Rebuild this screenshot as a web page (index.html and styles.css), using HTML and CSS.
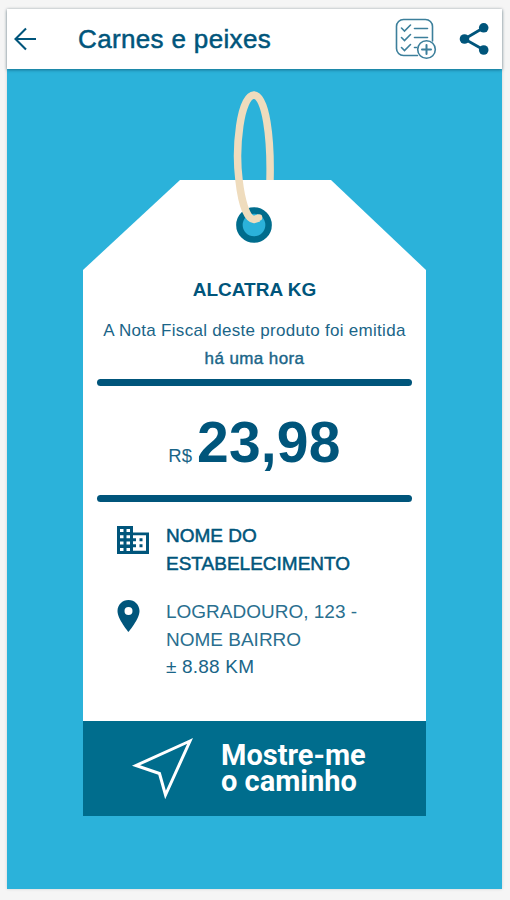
FILE: index.html
```html
<!DOCTYPE html>
<html lang="pt-BR">
<head>
    <meta charset="UTF-8">
    <meta name="viewport" content="width=device-width, initial-scale=1.0">
    <title>Carnes e peixes</title>
    <link rel="stylesheet" href="styles.css">
</head>
<body>
    <div class="screen">
        <header class="top-bar">
            <svg class="icon-back" viewBox="0 0 24 24" fill="none" stroke="currentColor" stroke-width="2.1">
                <path d="M22 12H1.500M12 1.500L1.500 12 12 22.500"/>
            </svg>
            <h1>Carnes e peixes</h1>
            <svg class="icon-list" viewBox="0 0 42 42" fill="none" stroke="currentColor" stroke-width="1.6" stroke-linecap="round">
                <path d="M22.500 37.500H8.500a7 7 0 0 1-7-7v-22a7 7 0 0 1 7-7h22a7 7 0 0 1 7 7V23"/>
                <path d="M6.500 10l3 3 6-6M6.500 19.500l3 3 6-6M6.500 29.500l3 3 6-6"/>
                <path d="M19.500 10.500h13M19.500 19.500h13M19.500 29.500h2"/>
                <circle cx="31.500" cy="31.500" r="8.800"/>
                <path d="M31.500 27v9M27 31.500h9" stroke-width="2"/>
            </svg>
            <svg class="icon-share" viewBox="0 0 30 34" fill="currentColor">
                <path d="M25 5.500L5.500 17 25 28" fill="none" stroke="currentColor" stroke-width="2.800"/>
                <circle cx="5.500" cy="17" r="4.800"/>
                <circle cx="24.700" cy="5.800" r="4.800"/>
                <circle cx="24.700" cy="28" r="4.800"/>
            </svg>
        </header>

        <main class="content">
            <div class="tag">
                <svg class="rope" viewBox="0 0 50 160" fill="none">
                    <circle cx="26" cy="135" r="14.600" fill="#2bb2da" stroke="#006d8d" stroke-width="6.500"/>
                    <path d="M42 90C43 48 38 6 26 5C12 6 7 58 11 90C13 108 18 129 26 129.500L31 128" stroke="#efdcbd" stroke-width="7.500"/>
                    <circle cx="31" cy="127.500" r="3.300" fill="#efdcbd"/>
                </svg>
                <div class="tag-body">
                    <h2>ALCATRA KG</h2>
                    <p class="issued">A Nota Fiscal deste produto foi emitida<br><strong>há uma hora</strong></p>
                    <hr>
                    <div class="price">
                        <span class="currency">R$</span>
                        <span class="value">23,98</span>
                    </div>
                    <hr>
                    <div class="info">
                        <svg class="icon-store" viewBox="0 0 32 28" fill="currentColor" fill-rule="evenodd">
                            <path d="M0 0H16V6.500H32V28H0ZM3 3v3h3.500v-3ZM9.500 3v3H13v-3ZM3 9.200v3h3.500v-3ZM9.500 9.200v3H13v-3ZM3 15.500v3h3.500v-3ZM9.500 15.500v3H13v-3ZM3 22v3h3.500v-3ZM9.500 22v3H13v-3ZM16 9.300v3h3v3h-3v3h3v3h-3v3.500H29V9.300ZM22.500 12.300h3v3h-3ZM22.500 18.300h3v3h-3Z"/>
                        </svg>
                        <p class="store">NOME DO<br>ESTABELECIMENTO</p>
                    </div>
                    <div class="info">
                        <svg class="icon-pin" viewBox="0 0 22 32" fill="currentColor" fill-rule="evenodd">
                            <path d="M11 0C4.900 0 0 4.900 0 11c0 8 11 21 11 21s11-13 11-21C22 4.900 17.100 0 11 0ZM11 7a4 4 0 1 1 0 8 4 4 0 0 1 0-8Z"/>
                        </svg>
                        <p class="address">LOGRADOURO, 123 -<br>NOME BAIRRO<br><span class="distance">± 8.88 KM</span></p>
                    </div>
                </div>
                <button class="route">
                    <svg class="icon-nav" viewBox="0 0 62 62" fill="none" stroke="currentColor" stroke-width="3">
                        <path d="M59 3L5 27.500 28.500 35.500 34.500 57Z"/>
                    </svg>
                    <span>Mostre-me<br>o caminho</span>
                </button>
            </div>
        </main>
    </div>
</body>
</html>
```
FILE: styles.css
```css
* {
    box-sizing: border-box;
}
body {
    margin: 0;
    padding: 9px 8px 11px 7px;
    height: 900px;
    background-color: #f5f5f5;
    font-family: "Liberation Sans", Arial, sans-serif;
    color: #00557b;
}
h1, h2, p {
    margin: 0;
}
svg {
    display: block;
    flex-shrink: 0;
}
.screen {
    display: flex;
    flex-direction: column;
    height: 880px;
    background-color: #2bb2da;
    box-shadow: 0 0 3px rgba(0,0,0,0.15);
}
.top-bar {
    display: flex;
    align-items: center;
    height: 60px;
    padding: 0 13px 0 7px;
    background-color: white;
    box-shadow: 0 1px 3px rgba(0,50,70,0.5);
}
.icon-back {
    width: 24px;
    height: 24px;
}
h1 {
    flex: 1;
    margin-left: 40px;
    padding-top: 1px;
    font-size: 26px;
    font-weight: normal;
    letter-spacing: 0.35px;
    -webkit-text-stroke: 0.5px;
}
.icon-list {
    width: 42px;
    height: 42px;
    margin-right: 22px;
    color: #3c7f9b;
}
.icon-share {
    width: 30px;
    height: 34px;
}
.content {
    padding: 111px 76px 0;
}
.tag {
    position: relative;
    width: 343px;
}
/* hangs over the top edge of the tag */
.rope {
    position: absolute;
    z-index: 1;
    top: -90px;
    left: 145px;
    width: 50px;
    height: 160px;
}
.tag-body {
    height: 541px;
    padding: 98px 14px 0;
    background-color: white;
    clip-path: polygon(97px 0, 248px 0, 100% 90px, 100% 100%, 0 100%, 0 90px);
}
h2 {
    font-size: 19px;
    line-height: 24px;
    text-align: center;
}
.issued {
    margin-top: 15px;
    font-size: 17px;
    line-height: 27.5px;
    text-align: center;
    white-space: nowrap;
    letter-spacing: 0.29px;
    color: #1a6588;
}
.issued strong {
    font-weight: normal;
    letter-spacing: 0.4px;
    -webkit-text-stroke: 0.4px;
}
hr {
    height: 7px;
    margin: 0;
    border: none;
    border-radius: 3.5px;
    background-color: #00557b;
}
.issued + hr {
    margin-top: 7px;
}
.price {
    display: flex;
    align-items: baseline;
    justify-content: center;
    height: 109px;
    padding-top: 23px;
}
.currency {
    margin-right: 5px;
    font-size: 18.5px;
    color: #1a6588;
}
.value {
    font-size: 57px;
    font-weight: bold;
    line-height: 66px;
    letter-spacing: 0.2px;
}
.info {
    display: flex;
    margin-top: 20px;
    padding-left: 20px;
    font-size: 19px;
    line-height: 27.5px;
}
.info + .info {
    margin-top: 21px;
}
.icon-store {
    width: 32px;
    height: 28px;
    margin: 4px 17px 0 0;
}
.icon-pin {
    width: 23px;
    height: 32px;
    margin: 2px 26px 0 0;
}
.store {
    -webkit-text-stroke: 0.5px;
}
.address {
    color: #2a6f8f;
}
.distance {
    color: #1a6588;
    letter-spacing: 0.2px;
}
.route {
    display: flex;
    align-items: center;
    width: 100%;
    height: 95px;
    padding: 0 0 0 48px;
    border: none;
    background-color: #006d8d;
    color: white;
    font-family: Roboto, sans-serif;
    font-size: 29px;
    font-weight: bold;
    line-height: 25.5px;
    text-align: left;
}
.icon-nav {
    width: 62px;
    height: 62px;
    margin-right: 28px;
}
```
